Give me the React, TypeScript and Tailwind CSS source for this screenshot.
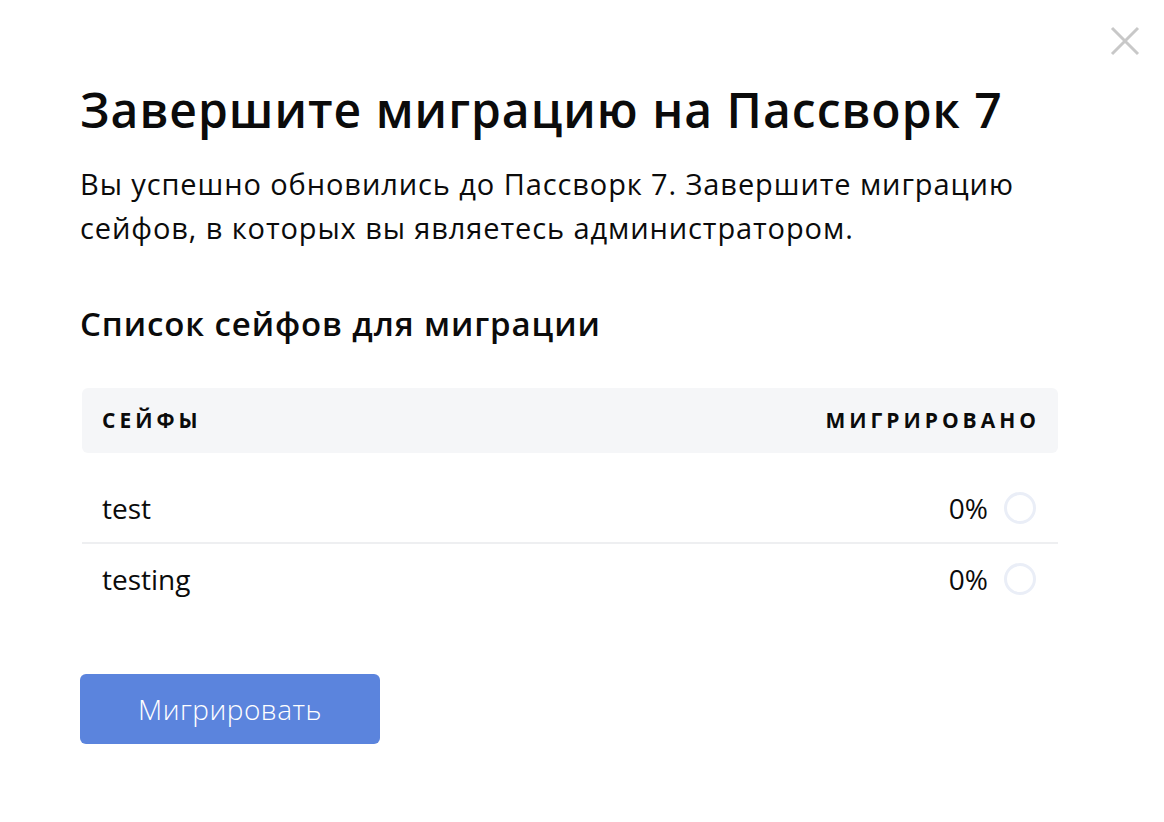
import React from "react";

const rows = [
  { name: "test", pct: "0%" },
  { name: "testing", pct: "0%" },
];

export default function App() {
  return (
    <div
      className="relative w-[1164px] h-[822px] bg-white text-[#0b0b0b]"
      style={{ fontFamily: "'Open Sans', Lato, sans-serif" }}
    >
      <button className="absolute right-[23px] top-[25px] w-[32px] h-[32px] flex items-center justify-center">
        <svg width="30" height="30" viewBox="0 0 30 30" fill="none">
          <path d="M2 2 L28 28 M28 2 L2 28" stroke="#c8c8c8" strokeWidth="3" />
        </svg>
      </button>
      <div className="pl-[80px] pt-[80px]">
        <h1 className="text-[48px] leading-[60px] font-semibold tracking-[1px] whitespace-nowrap">
          Завершите миграцию на Пассворк 7
        </h1>
        <p className="mt-[22px] text-[29px] leading-[44px] font-normal tracking-[0.9px] whitespace-nowrap">
          Вы успешно обновились до Пассворк 7. Завершите миграцию
          <br />
          сейфов, в которых вы являетесь администратором.
        </p>
        <h2 className="mt-[52px] text-[33px] leading-[44px] font-semibold tracking-[0.9px]">
          Список сейфов для миграции
        </h2>
        <div className="mt-[42px] ml-[2px] w-[976px]">
          <div className="h-[65px] bg-[#f5f6f8] rounded-[6px] flex items-center justify-between pl-[20px] pr-[18px]">
            <span className="text-[21px] font-bold tracking-[4px]">СЕЙФЫ</span>
            <span className="text-[21px] font-bold tracking-[4px]">МИГРИРОВАНО</span>
          </div>
          {rows.map((r, i) => (
            <div
              key={r.name}
              className={`flex items-center justify-between pl-[20px] pr-[22px] ${i === 0 ? "h-[91px] pt-[20px] border-b-2 border-[#eeeff1]" : "h-[70px]"}`}
            >
              <span className="text-[28px]">{r.name}</span>
              <div className="flex items-center gap-[16px]">
                <span className="text-[28px]">{r.pct}</span>
                <span className="w-[32px] h-[32px] rounded-full border-[3px] border-[#eaeef7]" />
              </div>
            </div>
          ))}
        </div>
        <button className="mt-[60px] w-[300px] h-[70px] rounded-[6px] bg-[#5b84dd] text-white text-[28px] font-light tracking-[0.5px]">
          Мигрировать
        </button>
      </div>
    </div>
  );
}
